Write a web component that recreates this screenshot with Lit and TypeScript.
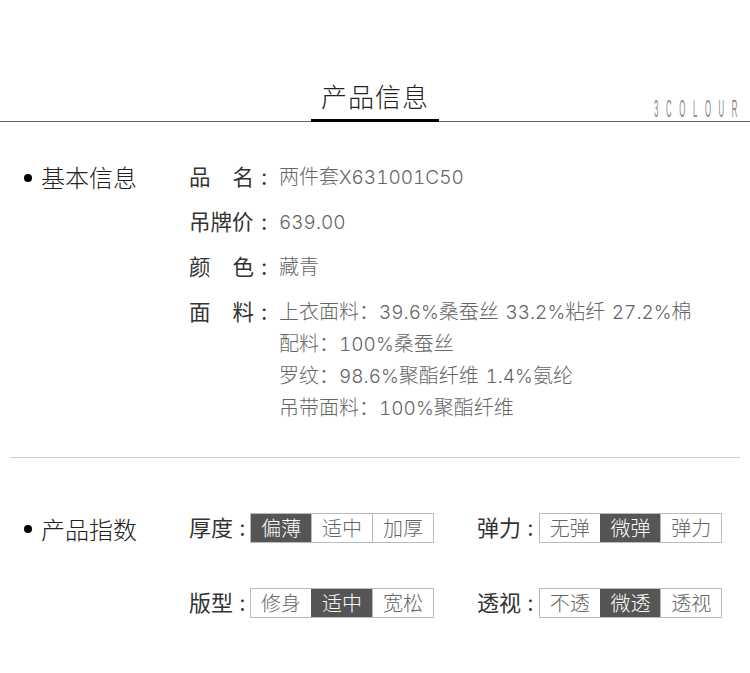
import { LitElement, html, css } from "lit";
import { customElement } from "lit/decorators.js";

@customElement("app-root")
export class AppRoot extends LitElement {
  static styles = css`
    :host { display: block; width: 750px; height: 673px; background: #fff; overflow: hidden;
      font-family: Inter, "Noto Sans CJK SC", sans-serif; font-weight: 300; color: #222; }
    .head { height: 122px; box-sizing: border-box; border-bottom: 1px solid #666; position: relative;
      display: flex; justify-content: center; }
    .title { width: 128px; height: 122px; box-sizing: border-box; padding-top: 79px; text-align: center;
      font-size: 26px; line-height: 38px; letter-spacing: 1px; color: #222; font-weight: 300; position: relative; }
    .bar { position: absolute; left: 0; right: 0; top: 119px; height: 3px; background: #000; }
    .brand { position: absolute; left: 654px; top: 96px; font-family: "Liberation Sans", sans-serif; font-size: 23px; line-height: 26px;
      color: #888; letter-spacing: 22.4px; transform: scaleX(0.34); transform-origin: left top; white-space: nowrap; font-weight: 400; }
    .sec { display: flex; }
    .side { display: flex; align-items: center; height: 32px; box-sizing: border-box; padding-left: 24px; width: 189px;
      font-size: 24px; color: #222; gap: 9px; flex: none; }
    .dot { width: 8px; height: 8px; border-radius: 50%; background: #000; flex: none; margin-top: 2px; }
    .basic { padding-top: 39px; height: 336px; box-sizing: border-box; border-bottom: 1px solid #ccc; margin: 0 10px; }
    .basic .side { width: 179px; padding-left: 14px; margin-top: -1px; height: 33px; }
    .rows { display: flex; flex-direction: column; gap: 13px; }
    .row { display: flex; line-height: 32px; }
    .lab { width: 65px; font-size: 21.5px; font-weight: 400; display: flex; justify-content: space-between; color: #333; flex: none; white-space: nowrap; }
    .colon { width: 25px; font-size: 22px; font-weight: 400; flex: none; color: #333; padding-left: 7px; box-sizing: border-box; }
    .val { font-size: 20px; color: #666; }
    .val div { height: 32px; white-space: nowrap; }
    .lat { font-size: 19px; font-variant-numeric: tabular-nums; word-spacing: 1.5px; }
    .idx { padding-top: 55px; }
    .idx .side { margin-top: -1px; }
    .grid { display: grid; grid-template-columns: 288px 245px; row-gap: 45px; }
    .it { display: flex; align-items: center; height: 30px; }
    .it .n { font-size: 22px; font-weight: 400; flex: none; color: #333; white-space: nowrap; line-height: 30px; }
    .it:nth-child(odd) .n { width: 61px; }
    .it:nth-child(even) .n { width: 62px; }
    .tg { display: flex; border: 1px solid #bbb; height: 30px; box-sizing: border-box; width: 184px; }
    .it:nth-child(even) .tg { width: 183px; }
    .tg span { flex: 1; text-align: center; font-size: 20px; line-height: 30px; color: #666; border-left: 1px solid #bbb; }
    .tg span:first-child { border-left: none; }
    .tg span.on { background: #555; color: #fff; border-left-color: #555; }
  `;

  tg(items: string[], on: number) {
    return html`<div class="tg">${items.map((t, i) => html`<span class=${i === on ? "on" : ""}>${t}</span>`)}</div>`;
  }

  item(n: string, items: string[], on: number) {
    return html`<div class="it"><div class="n">${n} :</div>${this.tg(items, on)}</div>`;
  }

  line(text: string) {
    const parts = text.split(/([\x20-\x7e]+)/);
    return html`<div>${parts.map((p, i) => (i % 2 ? html`<span class="lat">${p}</span>` : p))}</div>`;
  }

  render() {
    return html`
      <div class="head">
        <div class="title">产品信息<div class="bar"></div></div>
        <div class="brand">3COLOUR</div>
      </div>
      <div class="sec basic">
        <div class="side"><i class="dot"></i>基本信息</div>
        <div class="rows">
          <div class="row"><div class="lab"><span>品</span><span>名</span></div><div class="colon">:</div><div class="val">${this.line("两件套X631001C50")}</div></div>
          <div class="row"><div class="lab"><span>吊牌价</span></div><div class="colon">:</div><div class="val">${this.line("639.00")}</div></div>
          <div class="row"><div class="lab"><span>颜</span><span>色</span></div><div class="colon">:</div><div class="val">${this.line("藏青")}</div></div>
          <div class="row"><div class="lab"><span>面</span><span>料</span></div><div class="colon">:</div><div class="val">
            ${this.line("上衣面料：39.6%桑蚕丝 33.2%粘纤 27.2%棉")}
            ${this.line("配料：100%桑蚕丝")}
            ${this.line("罗纹：98.6%聚酯纤维 1.4%氨纶")}
            ${this.line("吊带面料：100%聚酯纤维")}
          </div></div>
        </div>
      </div>
      <div class="sec idx">
        <div class="side"><i class="dot"></i>产品指数</div>
        <div class="grid">
          ${this.item("厚度", ["偏薄", "适中", "加厚"], 0)}
          ${this.item("弹力", ["无弹", "微弹", "弹力"], 1)}
          ${this.item("版型", ["修身", "适中", "宽松"], 1)}
          ${this.item("透视", ["不透", "微透", "透视"], 1)}
        </div>
      </div>
    `;
  }
}
